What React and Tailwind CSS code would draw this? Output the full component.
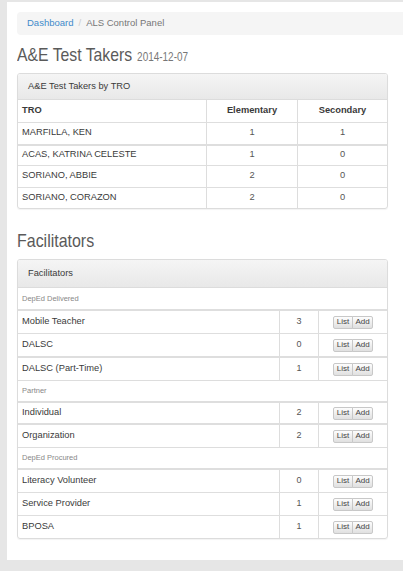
import React from "react";

const tro = [
  ["MARFILLA, KEN", "1", "1"],
  ["ACAS, KATRINA CELESTE", "1", "0"],
  ["SORIANO, ABBIE", "2", "0"],
  ["SORIANO, CORAZON", "2", "0"],
];

const fac = [
  { cat: "DepEd Delivered" },
  { name: "Mobile Teacher", n: "3", h: "h-[24px]" },
  { name: "DALSC", n: "0", h: "h-[23px]" },
  { name: "DALSC (Part-Time)", n: "1", h: "h-[24px]" },
  { cat: "Partner" },
  { name: "Individual", n: "2", h: "h-[22px]" },
  { name: "Organization", n: "2", h: "h-[24px]" },
  { cat: "DepEd Procured" },
  { name: "Literacy Volunteer", n: "0", h: "h-[24px]" },
  { name: "Service Provider", n: "1", h: "h-[23px]" },
  { name: "BPOSA", n: "1", h: "h-[23px]" },
];

function Btns() {
  return (
    <div className="flex h-[13px] text-[8px] leading-none text-[#444]">
      <span className="flex w-[20px] items-center justify-center rounded-l-[2px] border border-[#c8c8c8] bg-gradient-to-b from-[#fdfdfd] to-[#e0e0e0]">
        List
      </span>
      <span className="-ml-px flex w-[21px] items-center justify-center rounded-r-[2px] border border-[#c8c8c8] bg-gradient-to-b from-[#fdfdfd] to-[#e0e0e0]">
        Add
      </span>
    </div>
  );
}

export default function App() {
  return (
    <div className="min-h-[571px] bg-[#e6e6e6] pl-[7px] pt-[2px] font-['Liberation_Sans',Arial,sans-serif] text-[#3a3a3a]">
      <div className="h-[558px] bg-white pl-[10px] pt-[10px]">
        <div className="flex h-[23px] items-center rounded-l-[4px] bg-[#f5f5f5] pl-[10px] text-[9.5px]">
          <span className="text-[#428bca]">Dashboard</span>
          <span className="px-[5px] text-[#ccc]">/</span>
          <span className="text-[#777]">ALS Control Panel</span>
        </div>

        <h1 className="mt-[9px] flex h-[21px] origin-left scale-x-[0.83] items-baseline text-[19px] leading-[21px] text-[#5a5a5a]">
          A&amp;E Test Takers
          <span className="ml-[6px] text-[12px] text-[#777]">2014-12-07</span>
        </h1>

        <div className="mt-[8px] w-[371px] overflow-hidden rounded-[3px] border border-[#dcdcdc] shadow-[0_1px_1px_rgba(0,0,0,0.05)]">
          <div className="flex h-[26px] items-center border-b border-[#dcdcdc] bg-gradient-to-b from-[#f5f5f5] to-[#e8e8e8] pl-[10px] text-[9.3px]">
            A&amp;E Test Takers by TRO
          </div>
          <div className="text-[9.3px]">
            <div className="flex h-[22px] items-center font-bold">
              <div className="flex h-full w-[189px] items-center border-r border-[#ddd] pl-[4px]">TRO</div>
              <div className="flex h-full w-[91px] items-center justify-center border-r border-[#ddd]">Elementary</div>
              <div className="flex h-full flex-1 items-center justify-center">Secondary</div>
            </div>
            {tro.map((r, i) => (
              <div
                key={i}
                className={`flex h-[21.5px] items-stretch ${i === 1 ? "border-t-2" : "border-t"} border-[#dedede]`}
              >
                <div className="flex w-[189px] items-center border-r border-[#ddd] pl-[4px]">{r[0]}</div>
                <div className="flex w-[91px] items-center justify-center border-r border-[#ddd] text-[#555]">{r[1]}</div>
                <div className="flex flex-1 items-center justify-center text-[#555]">{r[2]}</div>
              </div>
            ))}
          </div>
        </div>

        <h2 className="mt-[21px] h-[21px] origin-left scale-x-[0.84] text-[19px] leading-[21px] text-[#5a5a5a]">
          Facilitators
        </h2>

        <div className="mt-[8px] w-[371px] overflow-hidden rounded-[3px] border border-[#dcdcdc] shadow-[0_1px_1px_rgba(0,0,0,0.05)]">
          <div className="flex h-[28px] items-center border-b border-[#dcdcdc] bg-gradient-to-b from-[#f5f5f5] to-[#e8e8e8] pl-[10px] text-[9.3px]">
            Facilitators
          </div>
          {fac.map((r, i) =>
            r.cat ? (
              <div
                key={i}
                className={`flex h-[21px] items-center pl-[4px] text-[7.5px] text-[#888] ${i > 0 ? "border-t border-[#ddd]" : ""}`}
              >
                {r.cat}
              </div>
            ) : (
              <div
                key={i}
                className={`flex ${r.h} items-stretch border-[#dedede] ${fac[i - 1].cat || fac[i - 1].name === "DALSC" || fac[i - 1].name === "Individual" ? "border-t-2" : "border-t"} text-[9.3px]`}
              >
                <div className="flex w-[262px] items-center border-r border-[#ddd] pl-[4px]">{r.name}</div>
                <div className="flex w-[39px] items-center justify-center border-r border-[#ddd] text-[9px] text-[#555]">{r.n}</div>
                <div className="flex flex-1 items-center justify-center">
                  <Btns />
                </div>
              </div>
            )
          )}
        </div>
      </div>
    </div>
  );
}
